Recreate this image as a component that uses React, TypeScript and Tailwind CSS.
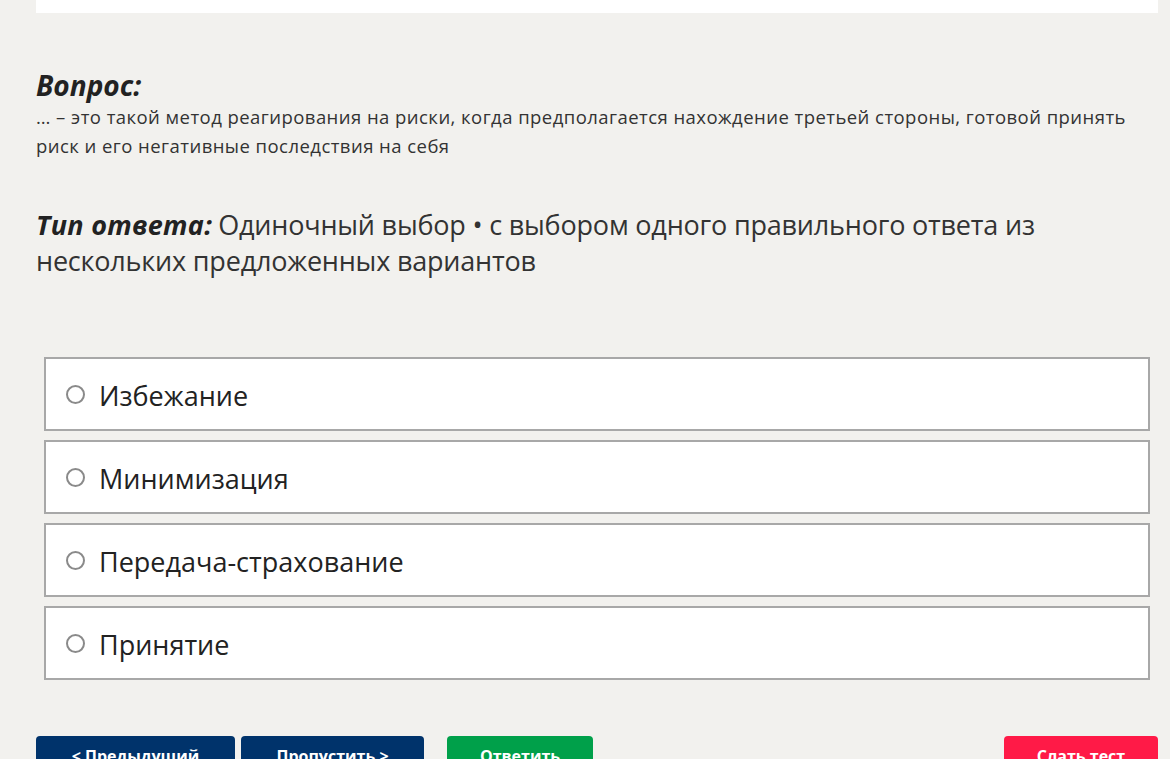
import React from "react"

const options = ["Избежание", "Минимизация", "Передача-страхование", "Принятие"]

export default function App() {
  return (
    <div
      className="min-h-[759px] h-[759px] overflow-hidden bg-[#f2f1ee] text-[#222]"
      style={{ fontFamily: '"Open Sans", "Noto Sans", sans-serif' }}
    >
      <div className="ml-[36px] mr-[12px] h-[13px] bg-white" />

      <div className="px-[36px] pt-[54px]">
        <h2 className="text-[28px] leading-[36px] font-bold italic text-[#222]">Вопрос:</h2>
        <p className="text-[18.5px] leading-[29px] text-[#333] -mt-[1px] -mr-[10px] tracking-[0.45px]">
          … – это такой метод реагирования на риски, когда предполагается нахождение третьей стороны, готовой принять
          риск и его негативные последствия на себя
        </p>

        <p className="mt-[47px] text-[27px] leading-[36px] text-[#333] tracking-[-0.2px]">
          <span className="font-bold italic text-[#222] mr-[6px] tracking-[0.3px]">Тип ответа:</span>Одиночный выбор
          • с выбором одного правильного ответа из нескольких предложенных вариантов
        </p>
      </div>

      <div className="mt-[78px] ml-[44px] mr-[20px] flex flex-col gap-[9px]">
        {options.map((o) => (
          <label
            key={o}
            className="flex items-center h-[74px] bg-white border-2 border-[#a8a8a8] pl-[20px]"
          >
            <span className="w-[19px] h-[19px] rounded-full border-2 border-[#8a8a8a] bg-white" />
            <span className="ml-[14px] mt-[4px] text-[27px] text-[#222]">{o}</span>
          </label>
        ))}
      </div>

      <div className="mt-[56px] pl-[36px] pr-[12px] flex items-start">
        <button className="w-[199px] h-[40px] rounded-t-[4px] bg-[#00336b] text-white font-bold text-[16px] pt-[8px] flex justify-center items-start">
          &lt; Предыдущий
        </button>
        <button className="ml-[6px] w-[183px] h-[40px] rounded-t-[4px] bg-[#00336b] text-white font-bold text-[16px] pt-[8px] flex justify-center items-start">
          Пропустить &gt;
        </button>
        <button className="ml-[23px] w-[146px] h-[40px] rounded-t-[4px] bg-[#00a04a] text-white font-bold text-[16px] pt-[8px] flex justify-center items-start">
          Ответить
        </button>
        <div className="flex-1" />
        <button className="w-[154px] h-[40px] rounded-t-[4px] bg-[#ff1a47] text-white font-bold text-[16px] pt-[8px] flex justify-center items-start">
          Слать тест
        </button>
      </div>
    </div>
  )
}
